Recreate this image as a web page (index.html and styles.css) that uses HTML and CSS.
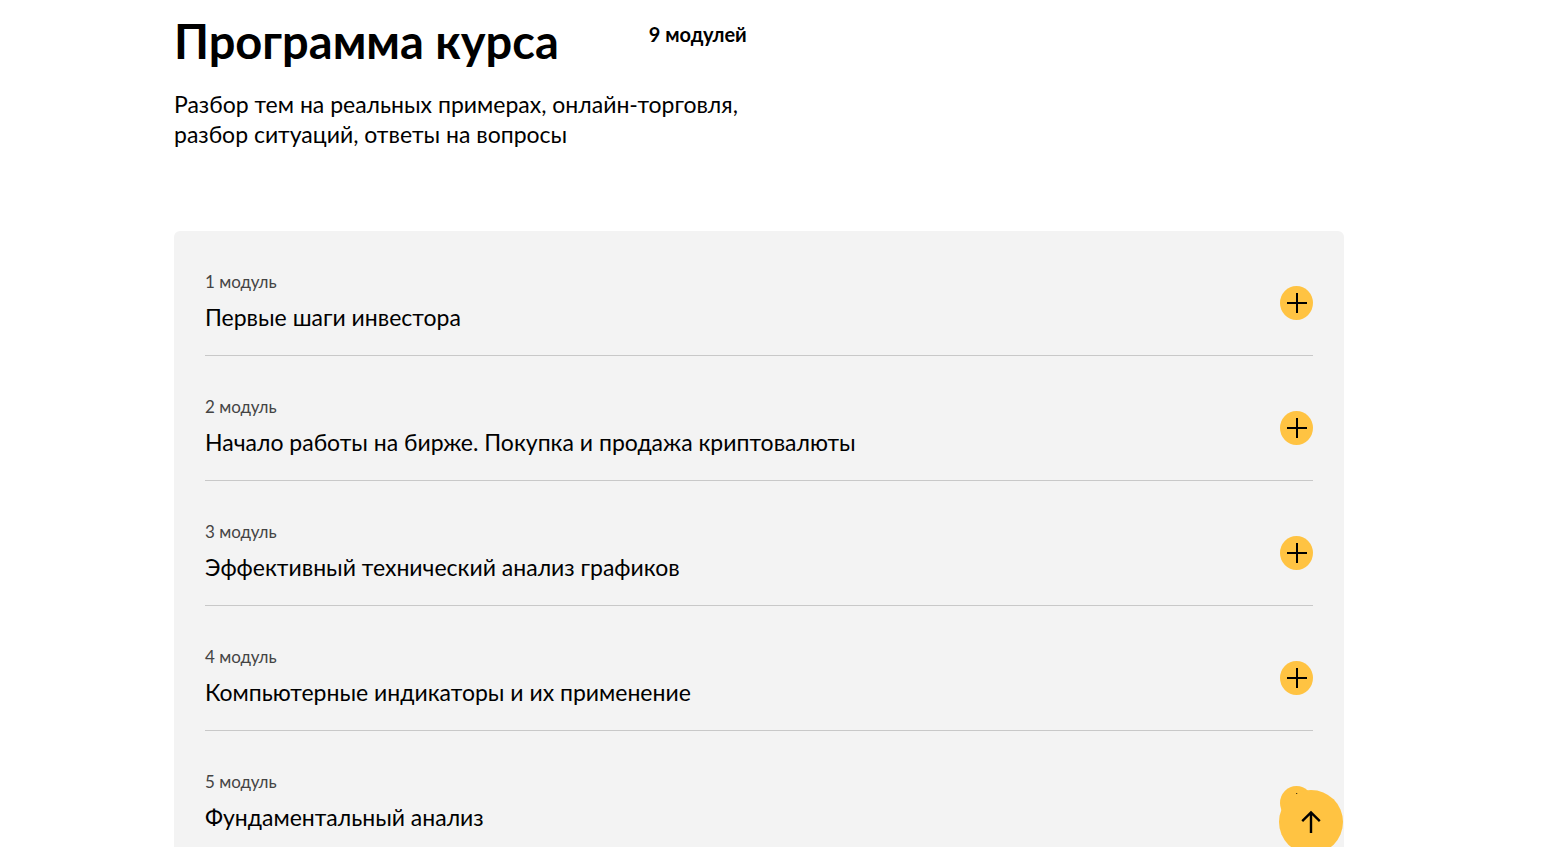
FILE: index.html
```html
<!DOCTYPE html>
<html lang="ru">
<head>
  <meta charset="UTF-8">
  <meta name="viewport" content="width=device-width, initial-scale=1.0">
  <title>Программа курса</title>
  <link rel="stylesheet" href="styles.css">
</head>
<body>
  <section class="program">
    <header class="program-header">
      <h1>Программа курса</h1>
      <p class="count">9 модулей</p>
    </header>
    <p class="lead">Разбор тем на реальных примерах, онлайн-торговля,<br>разбор ситуаций, ответы на вопросы</p>

    <div class="modules">
      <article class="module">
        <div>
          <p class="module-number">1 модуль</p>
          <h2 id="module-1">Первые шаги инвестора</h2>
        </div>
        <button class="toggle" type="button" aria-labelledby="module-1"><svg viewBox="0 0 33 34"><path d="M7 17h20M17 7v20"/></svg></button>
      </article>
      <article class="module">
        <div>
          <p class="module-number">2 модуль</p>
          <h2 id="module-2">Начало работы на бирже. Покупка и продажа криптовалюты</h2>
        </div>
        <button class="toggle" type="button" aria-labelledby="module-2"><svg viewBox="0 0 33 34"><path d="M7 17h20M17 7v20"/></svg></button>
      </article>
      <article class="module">
        <div>
          <p class="module-number">3 модуль</p>
          <h2 id="module-3">Эффективный технический анализ графиков</h2>
        </div>
        <button class="toggle" type="button" aria-labelledby="module-3"><svg viewBox="0 0 33 34"><path d="M7 17h20M17 7v20"/></svg></button>
      </article>
      <article class="module">
        <div>
          <p class="module-number">4 модуль</p>
          <h2 id="module-4">Компьютерные индикаторы и их применение</h2>
        </div>
        <button class="toggle" type="button" aria-labelledby="module-4"><svg viewBox="0 0 33 34"><path d="M7 17h20M17 7v20"/></svg></button>
      </article>
      <article class="module">
        <div>
          <p class="module-number">5 модуль</p>
          <h2 id="module-5">Фундаментальный анализ</h2>
        </div>
        <button class="toggle" type="button" aria-labelledby="module-5"><svg viewBox="0 0 33 34"><path d="M7 17h20M17 7v20"/></svg></button>
      </article>
    </div>
  </section>

  <a class="to-top" href="#" aria-label="Наверх"><svg viewBox="0 0 64 64"><path d="M32 43V22.5M23.2 31.2l8.8-8.7 8.8 8.7"/></svg></a>
</body>
</html>
```

FILE: styles.css
```css
* {
  box-sizing: border-box;
}
html {
  scrollbar-width: none;
}
body {
  margin: 0;
  padding-right: 25px;
  background: #fff;
  color: #000;
  font-family: Lato, "Open Sans", sans-serif;
}
h1, h2, p {
  margin: 0;
}
.program {
  max-width: 1170px;
  margin: 0 auto;
  padding-top: 11px;
}
.program-header {
  display: flex;
  gap: 90px;
}
h1 {
  font-size: 47px;
  line-height: 60px;
  font-weight: 700;
}
.count {
  padding-top: 8px;
  font-size: 20px;
  line-height: 30px;
  font-weight: 700;
}
.lead {
  margin-top: 18px;
  font-size: 23px;
  line-height: 30px;
}
.modules {
  margin-top: 82px;
  padding: 0 31px;
  background: #f3f3f3;
  border-radius: 6px;
}
.module {
  display: flex;
  justify-content: space-between;
  align-items: flex-start;
  padding: 39px 0 21px;
  border-bottom: 1px solid #c8c8c8;
}
.module-number {
  font-size: 17px;
  line-height: 24px;
  color: #444;
}
h2 {
  margin-top: 7px;
  font-size: 23px;
  line-height: 33px;
  font-weight: 400;
}
.toggle {
  flex-shrink: 0;
  width: 33px;
  height: 34px;
  margin-top: 16px;
  padding: 0;
  border: none;
  border-radius: 50%;
  background: #ffc342;
  cursor: pointer;
}
svg {
  display: block;
  fill: none;
  stroke: #000;
  stroke-width: 2;
}
.to-top {
  position: fixed;
  right: 200px;
  bottom: -7px;
  width: 64px;
  height: 64px;
  border-radius: 50%;
  background: #ffc342;
}
.to-top svg {
  stroke-width: 2.4;
}
```
